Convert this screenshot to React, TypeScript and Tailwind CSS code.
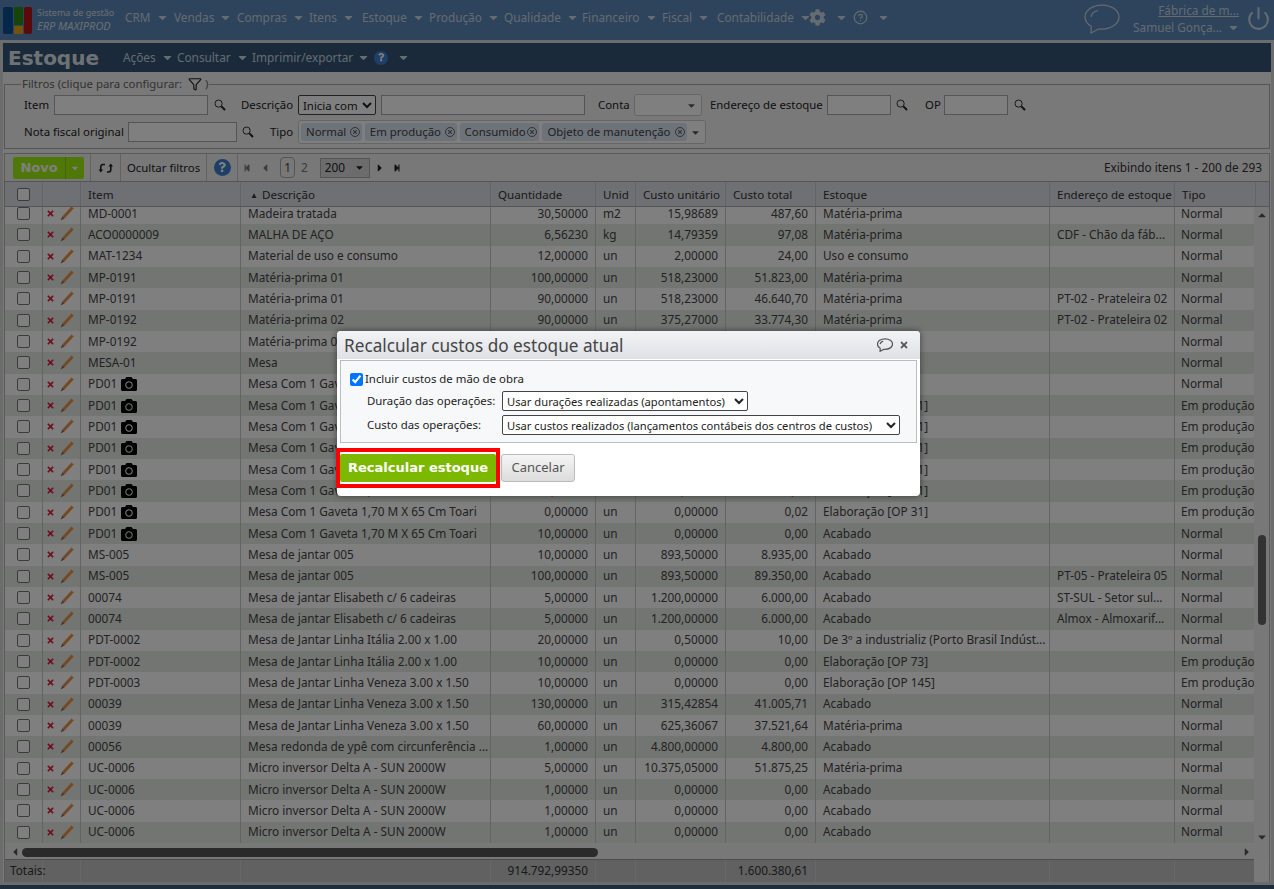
import { Filter, Power, CircleHelp } from 'lucide-react';
import { FaCamera, FaCog, FaTimes, FaCaretDown, FaCaretUp, FaCaretLeft, FaCaretRight, FaStepBackward, FaStepForward, FaQuestion } from 'react-icons/fa';

const FONT = "font-['Noto_Sans',sans-serif]";
const HEAVY = "font-['DejaVu_Sans',sans-serif] font-bold";
const COLS = 'grid-cols-[38px_38px_160px_250px_105px_40px_90px_90px_234px_125px_81px]';

type Row = [string, string, string, string, string, string, string, string, string, boolean?];

const OP = 'Mesa Com 1 Gaveta 1,70 M X 65 Cm Toari';
const VEN = 'Mesa de Jantar Linha Veneza 3.00 x 1.50';
const ITA = 'Mesa de Jantar Linha Itália 2.00 x 1.00';
const UC = 'Micro inversor Delta A - SUN 2000W';

const rows: Row[] = [
  ['MD-0001', 'Madeira tratada', '30,50000', 'm2', '15,98689', '487,60', 'Matéria-prima', '', 'Normal'],
  ['ACO0000009', 'MALHA DE AÇO', '6,56230', 'kg', '14,79359', '97,08', 'Matéria-prima', 'CDF - Chão da fáb...', 'Normal'],
  ['MAT-1234', 'Material de uso e consumo', '12,00000', 'un', '2,00000', '24,00', 'Uso e consumo', '', 'Normal'],
  ['MP-0191', 'Matéria-prima 01', '100,00000', 'un', '518,23000', '51.823,00', 'Matéria-prima', '', 'Normal'],
  ['MP-0191', 'Matéria-prima 01', '90,00000', 'un', '518,23000', '46.640,70', 'Matéria-prima', 'PT-02 - Prateleira 02', 'Normal'],
  ['MP-0192', 'Matéria-prima 02', '90,00000', 'un', '375,27000', '33.774,30', 'Matéria-prima', 'PT-02 - Prateleira 02', 'Normal'],
  ['MP-0192', 'Matéria-prima 02', '10,00000', 'un', '375,27000', '3.752,70', 'Matéria-prima', '', 'Normal'],
  ['MESA-01', 'Mesa', '10,00000', 'un', '0,00000', '0,00', 'Acabado', '', 'Normal'],
  ['PD01', OP, '10,00000', 'un', '0,00000', '0,00', 'Acabado', '', 'Normal', true],
  ['PD01', OP, '1,00000', 'un', '0,00000', '0,00', 'Elaboração [OP 31]', '', 'Em produção', true],
  ['PD01', OP, '1,00000', 'un', '0,00000', '0,00', 'Elaboração [OP 31]', '', 'Em produção', true],
  ['PD01', OP, '1,00000', 'un', '0,00000', '0,00', 'Elaboração [OP 31]', '', 'Em produção', true],
  ['PD01', OP, '1,00000', 'un', '0,00000', '0,00', 'Elaboração [OP 31]', '', 'Em produção', true],
  ['PD01', OP, '1,00000', 'un', '0,00000', '0,00', 'Elaboração [OP 31]', '', 'Em produção', true],
  ['PD01', OP, '0,00000', 'un', '0,00000', '0,02', 'Elaboração [OP 31]', '', 'Em produção', true],
  ['PD01', OP, '10,00000', 'un', '0,00000', '0,00', 'Acabado', '', 'Normal', true],
  ['MS-005', 'Mesa de jantar 005', '10,00000', 'un', '893,50000', '8.935,00', 'Acabado', '', 'Normal'],
  ['MS-005', 'Mesa de jantar 005', '100,00000', 'un', '893,50000', '89.350,00', 'Acabado', 'PT-05 - Prateleira 05', 'Normal'],
  ['00074', 'Mesa de jantar Elisabeth c/ 6 cadeiras', '5,00000', 'un', '1.200,00000', '6.000,00', 'Acabado', 'ST-SUL - Setor sul...', 'Normal'],
  ['00074', 'Mesa de jantar Elisabeth c/ 6 cadeiras', '5,00000', 'un', '1.200,00000', '6.000,00', 'Acabado', 'Almox - Almoxarif...', 'Normal'],
  ['PDT-0002', ITA, '20,00000', 'un', '0,50000', '10,00', 'De 3º a industrializ (Porto Brasil Indúst...', '', 'Normal'],
  ['PDT-0002', ITA, '10,00000', 'un', '0,00000', '0,00', 'Elaboração [OP 73]', '', 'Em produção'],
  ['PDT-0003', VEN, '10,00000', 'un', '0,00000', '0,00', 'Elaboração [OP 145]', '', 'Em produção'],
  ['00039', VEN, '130,00000', 'un', '315,42854', '41.005,71', 'Acabado', '', 'Normal'],
  ['00039', VEN, '60,00000', 'un', '625,36067', '37.521,64', 'Matéria-prima', '', 'Normal'],
  ['00056', 'Mesa redonda de ypê com circunferência ...', '1,00000', 'un', '4.800,00000', '4.800,00', 'Acabado', '', 'Normal'],
  ['UC-0006', UC, '5,00000', 'un', '10.375,05000', '51.875,25', 'Matéria-prima', '', 'Normal'],
  ['UC-0006', UC, '1,00000', 'un', '0,00000', '0,00', 'Acabado', '', 'Normal'],
  ['UC-0006', UC, '1,00000', 'un', '0,00000', '0,00', 'Acabado', '', 'Normal'],
  ['UC-0006', UC, '1,00000', 'un', '0,00000', '0,00', 'Acabado', '', 'Normal'],
];

const menu = [
  ['CRM', 'w-[49px]'], ['Vendas', 'w-[63px]'], ['Compras', 'w-[72px]'], ['Itens', 'w-[53px]'], ['Estoque', 'w-[67px]'],
  ['Produção', 'w-[75px]'], ['Qualidade', 'w-[78px]'], ['Financeiro', 'w-[80px]'], ['Fiscal', 'w-[55px]'], ['Contabilidade', 'w-[93px]'],
];

function Caret() {
  return <FaCaretDown className="text-[13px] shrink-0" />;
}

function Bubble({ w, h, className }: { w: number; h: number; className?: string }) {
  return (
    <svg width={w} height={h} viewBox="0 0 36 30" fill="none" stroke="currentColor" strokeWidth={45 / w} className={className}>
      <path d="M18 1C8.6 1 1 6.4 1 13c0 3.8 2.4 7 6.2 9.3L7 29l8-4.2c1 .1 2 .2 3 .2 9.4 0 17-5.4 17-12S27.4 1 18 1z" />
      <path d="M7 13c.5-3 3-5.5 7-6.5" />
    </svg>
  );
}

function TopBar() {
  return (
    <div className="h-[40px] flex items-center bg-[#5c88b8] text-[#c9d6e2] text-[11.8px] whitespace-nowrap">
      <svg width="29" height="27" viewBox="0 0 29 27" className="ml-[3px] shrink-0">
        <rect x="0" y="0" width="10" height="27" rx="2" fill="#0a4f95" />
        <rect x="11" y="0" width="9" height="18" rx="1" fill="#2d8a14" />
        <rect x="11" y="19" width="9" height="8" rx="1" fill="#e8a512" />
        <rect x="21" y="0" width="8" height="27" rx="2" fill="#b5141a" />
      </svg>
      <div className="ml-[5px] w-[88px] leading-[13px] shrink-0 -mt-[3px]">
        <div className="text-[9px] text-[#d6dee6]">Sistema de gestão</div>
        <div className="text-[11px] italic text-[#d6dee6]">ERP MAXIPROD</div>
      </div>
      <div className="flex items-center -mt-[5px]">
        {menu.map(([label, w]) => (
          <div key={label} className={`flex items-center gap-[5px] ${w}`}>
            <span>{label}</span>
            <Caret />
          </div>
        ))}
        <FaCog className="text-[17px] ml-[-1px] mr-[9px]" />
        <Caret />
        <CircleHelp size={15} className="ml-[5px] mr-[9px]" />
        <Caret />
      </div>
      <div className="ml-auto flex items-center">
        <Bubble w={36} h={30} className="mr-[28px] -mt-[3px]" />
        <div className="w-[91px] text-right leading-[17px] -mt-[3px]">
          <div className="underline">Fábrica de m...</div>
          <div className="flex items-center justify-end gap-[5px] -mr-[1px]">Samuel Gonça... <Caret /></div>
        </div>
        <Power size={25} strokeWidth={2} className="ml-[7px] mr-[3px] -mt-[3px]" />
      </div>
    </div>
  );
}

function TitleBar() {
  return (
    <div className="h-[29px] bg-[#345474] flex items-center text-[11.8px] text-[#c9d6e2] pl-[5px] whitespace-nowrap">
      <span className={`${HEAVY} text-[20px] text-[#dfe5ea] w-[115px] leading-none`}>Estoque</span>
      <div className="flex items-center gap-[5px] w-[54px]">Ações <Caret /></div>
      <div className="flex items-center gap-[5px] w-[75px]">Consultar <Caret /></div>
      <div className="flex items-center gap-[4px]">Imprimir/exportar <Caret /></div>
      <HelpBall className="ml-[4px] mr-[9px]" size={14} />
      <Caret />
    </div>
  );
}

function HelpBall({ className, size }: { className?: string; size: number }) {
  return (
    <span
      className={`${className ?? ''} inline-flex items-center justify-center rounded-full bg-[#3b7fd0] text-white shrink-0`}
      style={{ width: size, height: size }}
    >
      <FaQuestion style={{ fontSize: size * 0.6 }} />
    </span>
  );
}

function Lens({ className }: { className?: string }) {
  return (
    <svg width="12" height="12" viewBox="0 0 12 12" fill="none" className={`shrink-0 ${className ?? ''}`}>
      <circle cx="4.6" cy="4.6" r="3.6" stroke="#333" strokeWidth="1" />
      <path d="M7.4 7.4L11 11" stroke="#222" strokeWidth="2" />
    </svg>
  );
}

function Box({ className }: { className: string }) {
  return <div className={`h-[20px] bg-white border border-[#aaa] shrink-0 ${className}`} />;
}

function Chip({ label, w }: { label: string; w: string }) {
  return (
    <span className={`h-[18px] flex items-center justify-between bg-[#dce4f2] rounded-[3px] pl-[5px] pr-[2px] text-[#444] ${w}`}>
      {label}
      <span className="w-[10px] h-[10px] rounded-full border border-[#666] flex items-center justify-center">
        <FaTimes className="text-[6px] text-[#666]" />
      </span>
    </span>
  );
}

function Filters() {
  return (
    <fieldset className="mx-[1px] mt-[4px] h-[73px] border border-[#aaa] pl-[19px] text-[11.4px] text-[#222] bg-[#f3f3f3] whitespace-nowrap">
      <legend className="text-[#666] flex items-center -ml-[3px] px-[1px] leading-[16px]">
        Filtros (clique para configurar:&nbsp;
        <Filter size={14} className="text-[#222] ml-[3px]" />&nbsp;)
      </legend>
      <div className="flex items-center h-[20px] mt-[3px]">
        <span className="w-[30px]">Item</span>
        <Box className="w-[154px]" />
        <Lens className="ml-[6px]" />
        <span className="ml-[15px] w-[57px]">Descrição</span>
        <select defaultValue="Inicia com" className="h-[20px] w-[78px] border border-[#444] rounded-[2px] bg-white shrink-0">
          <option>Inicia com</option>
        </select>
        <Box className="ml-[5px] w-[204px]" />
        <span className="ml-[13px] w-[36px]">Conta</span>
        <div className="h-[22px] w-[68px] border border-[#ccc] rounded-[3px] bg-white flex items-center justify-end pr-[4px] shrink-0"><FaCaretDown className="text-[11px] text-[#555]" /></div>
        <span className="ml-[8px] w-[117px]">Endereço de estoque</span>
        <Box className="w-[64px]" />
        <Lens className="ml-[5px]" />
        <span className="ml-[17px] w-[19px]">OP</span>
        <Box className="w-[64px]" />
        <Lens className="ml-[6px]" />
      </div>
      <div className="flex items-center h-[22px] mt-[6px]">
        <span className="w-[104px]">Nota fiscal original</span>
        <Box className="w-[109px]" />
        <Lens className="ml-[5px]" />
        <span className="ml-[16px] w-[28px]">Tipo</span>
        <div className="h-[24px] w-[408px] border border-[#ccc] rounded-[3px] bg-white flex items-center gap-[3px] pl-[2px] pr-[4px] shrink-0">
          <Chip label="Normal" w="w-[61px]" />
          <Chip label="Em produção" w="w-[92px]" />
          <Chip label="Consumido" w="w-[80px]" />
          <Chip label="Objeto de manutenção" w="w-[145px]" />
          <FaCaretDown className="text-[11px] text-[#555] ml-auto" />
        </div>
      </div>
    </fieldset>
  );
}

function Divider() {
  return <span className="w-px self-stretch bg-[#c5c5c5] shrink-0" />;
}

function Toolbar() {
  return (
    <div className="h-[28px] mt-[4px] mx-[1px] border border-[#b5b5b5] border-b-0 bg-[#f0f0f0] flex items-stretch text-[11.8px] text-[#222] whitespace-nowrap">
      <div className="w-[71px] h-[22px] ml-[8px] mt-[3px] rounded-[2px] bg-[#a0f010] flex items-center text-white shrink-0">
        <span className={`${HEAVY} w-[52px] text-center text-[13px]`}>Novo</span>
        <span className="w-px h-full bg-[#88cc10]" />
        <FaCaretDown className="text-[10px] ml-[4px]" />
      </div>
      <span className="w-[6px]" />
      <Divider />
      <span className="w-[29px] flex items-center justify-center">
        <svg width="16" height="14" viewBox="0 0 16 14" fill="none" stroke="#222" strokeWidth="1.6">
          <path d="M7 3.5H5C3.4 3.5 2.8 4.6 2.8 6v4" />
          <path d="M0.5 8.5L2.8 11.5L5.1 8.5" fill="#222" stroke="none" />
          <path d="M9 11h1.6c1.4 0 2.2-1 2.2-2.4V4" />
          <path d="M10.5 5.5L12.8 2.5L15.1 5.5" fill="#222" stroke="none" />
        </svg>
      </span>
      <Divider />
      <span className="w-[85px] flex items-center justify-center text-[11.4px]">Ocultar filtros</span>
      <Divider />
      <span className="w-[30px] flex items-center justify-center"><HelpBall size={17} /></span>
      <Divider />
      <div className="flex items-center text-[#777]">
        <FaStepBackward className="text-[8px] ml-[5px]" />
        <FaCaretLeft className="text-[12px] ml-[8px]" />
        <span className="ml-[9px] w-[15px] h-[21px] rounded-[4px] border border-[#aaa] flex items-center justify-center text-[#444]">1</span>
        <span className="ml-[6px]">2</span>
        <div className="ml-[12px] w-[50px] h-[20px] bg-[#d8d8d8] border border-[#aaa] flex items-center justify-between px-[4px] text-[#222]">200<FaCaretDown className="text-[11px]" /></div>
        <FaCaretRight className="text-[12px] ml-[4px] text-[#222]" />
        <FaStepForward className="text-[8px] ml-[7px] text-[#222]" />
      </div>
      <span className="ml-auto pr-[7px] self-center text-[#333]">Exibindo itens 1 - 200 de 293</span>
    </div>
  );
}

function HeaderRow() {
  const labels = ['Item', '▲ Descrição', 'Quantidade', 'Unid', 'Custo unitário', 'Custo total', 'Estoque', 'Endereço de estoque', 'Tipo'];
  return (
    <div className="h-[26px] mx-[1px] border border-[#aaa] bg-[#dfe1e6] flex text-[11.6px] text-[#333] whitespace-nowrap">
      <div className={`grid ${COLS} flex-1`}>
        <div className="border-r border-[#c8c8c8] flex items-center justify-center"><span className="w-[13px] h-[13px] rounded-[2px] border border-[#777] bg-white" /></div>
        <div className="border-r border-[#c8c8c8]" />
        {labels.map((l) => (
          <div key={l} className="border-r border-[#c8c8c8] pl-[7px] pt-[2px] flex items-center overflow-hidden">
            {l.startsWith('▲') ? <><span className="text-[8px] mr-[4px] ml-[2px]">▲</span>{l.slice(2)}</> : l}
          </div>
        ))}
      </div>
    </div>
  );
}

function Pencil() {
  return (
    <svg width="14" height="15" viewBox="0 0 14 15" fill="none">
      <path d="M12.6 1.4L3.4 11.6" stroke="#e89548" strokeWidth="3" />
      <path d="M2.3 10.6L4.5 12.6L0.6 14.4Z" fill="#8a6a4a" />
    </svg>
  );
}

function DataRow({ r, odd }: { r: Row; odd: boolean }) {
  const [item, desc, qty, unit, cost, total, stock, addr, kind, photo] = r;
  return (
    <div className={`grid ${COLS} h-[21.34px] items-center text-[11.8px] text-[#444] whitespace-nowrap ${odd ? 'bg-[#e6ebe6]' : 'bg-white'}`}>
      <div className="h-full border-r border-[#c8c8c8] flex items-center justify-center"><span className="w-[13px] h-[13px] rounded-[2px] border border-[#777] bg-white" /></div>
      <div className="h-full border-r border-[#c8c8c8] flex items-center pl-[3px] gap-[5px]">
        <FaTimes className="text-[9px] text-[#e0203a]" />
        <Pencil />
      </div>
      <div className="h-full border-r border-[#c8c8c8] pl-[7px] flex items-center gap-[4px]">
        {item}
        {photo && <FaCamera className="text-[16px] text-black" />}
      </div>
      <div className="h-full border-r border-[#c8c8c8] pl-[7px] flex items-center overflow-hidden">{desc}</div>
      <div className="h-full border-r border-[#c8c8c8] pr-[7px] flex items-center justify-end">{qty}</div>
      <div className="h-full border-r border-[#c8c8c8] pl-[7px] flex items-center">{unit}</div>
      <div className="h-full border-r border-[#c8c8c8] pr-[7px] flex items-center justify-end">{cost}</div>
      <div className="h-full border-r border-[#c8c8c8] pr-[7px] flex items-center justify-end">{total}</div>
      <div className="h-full border-r border-[#c8c8c8] pl-[7px] flex items-center overflow-hidden">{stock}</div>
      <div className="h-full border-r border-[#c8c8c8] pl-[7px] flex items-center overflow-hidden">{addr}</div>
      <div className="h-full pl-[6px] flex items-center">{kind}</div>
    </div>
  );
}

function Grid() {
  return (
    <div>
      <HeaderRow />
      <div className="mx-[1px] border-x border-[#b5b5b5]">
        <div className="flex h-[638px] overflow-hidden">
          <div className="flex-1 min-w-0 overflow-hidden">
            <div className="-mt-[4px]">
              {rows.map((r, i) => <DataRow key={i} r={r} odd={i % 2 === 1} />)}
            </div>
          </div>
          <div className="w-[15px] bg-[#f0f0f0] flex flex-col items-center shrink-0">
            <FaCaretUp className="text-[12px] text-[#555] mt-[2px]" />
            <div className="w-[8px] h-[90px] rounded-[4px] bg-[#666] mt-[314px]" />
            <FaCaretDown className="text-[12px] text-[#555] mt-auto mb-[2px]" />
          </div>
        </div>
        <div className="h-[14px] bg-[#f0f0f0] flex items-center pl-[4px] pr-[16px]">
          <FaCaretLeft className="text-[12px] text-[#555]" />
          <div className="ml-[1px] w-[576px] h-[9px] rounded-[5px] bg-[#555]" />
          <FaCaretRight className="text-[12px] text-[#555] ml-auto" />
        </div>
        <div className={`grid ${COLS} h-[23px] mr-[15px] bg-[#c2c2c2] border-t border-[#999] text-[11.8px] text-[#333] whitespace-nowrap`}>
          <div className="pl-[5px] flex items-center border-r border-[#d0d0d0]">Totais:</div>
          <div className="border-r border-[#d0d0d0]" />
          <div className="border-r border-[#d0d0d0]" />
          <div className="border-r border-[#d0d0d0]" />
          <div className="flex items-center justify-end pr-[7px] border-r border-[#d0d0d0]">914.792,99350</div>
          <div className="border-r border-[#d0d0d0]" />
          <div className="border-r border-[#d0d0d0]" />
          <div className="flex items-center justify-end pr-[7px] border-r border-[#d0d0d0]">1.600.380,61</div>
          <div className="border-r border-[#d0d0d0]" />
          <div className="border-r border-[#d0d0d0]" />
          <div />
        </div>
      </div>
    </div>
  );
}

function RecalcDialog() {
  return (
    <div className="absolute left-[337px] top-[331px] w-[583px] h-[165px] rounded-[4px] bg-white shadow-[0_0_6px_rgba(0,0,0,0.5)] text-[11.4px] text-[#222] px-[3px] whitespace-nowrap">
      <div className="h-[28px] -mx-[3px] px-[7px] rounded-t-[4px] bg-gradient-to-b from-[#f2f3f5] to-[#dfe1e5] flex items-center text-[#444]">
        <span className="text-[17.2px] leading-none mt-[2px]">Recalcular custos do estoque atual</span>
        <Bubble w={16} h={14} className="ml-auto text-[#555]" />
        <FaTimes className="ml-[6px] mr-[4px] text-[10px] text-[#555]" />
      </div>
      <div className="mt-[1px] h-[83px] border border-[#b8bec4] bg-[#f6f8fa] pl-[9px] pt-[11px]">
        <label className="flex items-center gap-[2px] h-[14px]">
          <input type="checkbox" defaultChecked className="w-[13px] h-[13px] accent-[#0075ff]" />
          Incluir custos de mão de obra
        </label>
        <div className="flex items-center mt-[5px] pl-[17px]">
          <span className="w-[135px]">Duração das operações:</span>
          <select defaultValue="a" className="h-[20px] w-[246px] border border-[#444] rounded-[2px] bg-white text-[11.2px]">
            <option value="a">Usar durações realizadas (apontamentos)</option>
          </select>
        </div>
        <div className="flex items-center mt-[4px] pl-[17px]">
          <span className="w-[135px]">Custo das operações:</span>
          <select defaultValue="a" className="h-[20px] w-[398px] border border-[#444] rounded-[2px] bg-white text-[11.2px]">
            <option value="a">Usar custos realizados (lançamentos contábeis dos centros de custos)</option>
          </select>
        </div>
      </div>
      <div className="flex items-center mt-[5px]">
        <div className="-ml-[4px] w-[164px] h-[40px] border-[4px] border-[#ff0000] flex items-center justify-center">
          <div className={`${HEAVY} w-[156px] h-[28px] bg-[#7cb800] rounded-[2px] flex items-center justify-center text-white text-[13px]`}>Recalcular estoque</div>
        </div>
        <div className="ml-[1px] w-[74px] h-[28px] bg-gradient-to-b from-[#f5f5f5] to-[#dcdcdc] border border-[#bbb] rounded-[3px] flex items-center justify-center text-[#555] text-[13px]">Cancelar</div>
      </div>
    </div>
  );
}

export default function App() {
  return (
    <div className={`${FONT} relative w-[1274px] h-[889px] overflow-hidden bg-[#3a5a7c]`}>
      <TopBar />
      <div className="border-[3px] border-[#d8d8d8] h-[845px] bg-[#f3f3f3]">
        <TitleBar />
        <Filters />
        <Toolbar />
        <Grid />
      </div>
      <div className="absolute inset-0 bg-black/50" />
      <RecalcDialog />
    </div>
  );
}
